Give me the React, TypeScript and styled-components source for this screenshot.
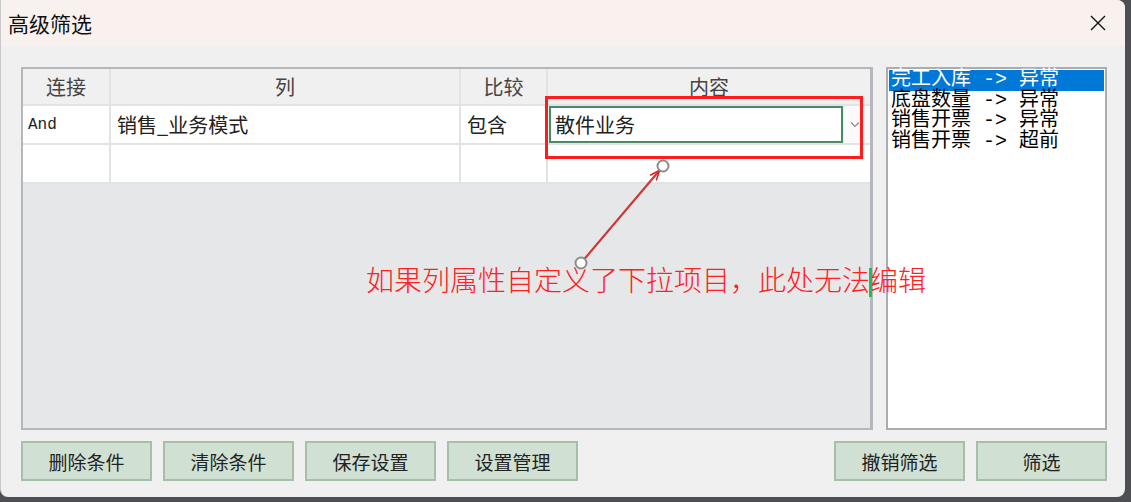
import React from 'react';
import styled, { createGlobalStyle } from 'styled-components';

const GlobalStyle = createGlobalStyle`
    html, body {
        margin: 0;
        padding: 0;
        background: #4d4f52;
    }
    * {
        box-sizing: border-box;
    }
`;

const cjk = `"Noto Sans CJK SC", "Noto Sans", sans-serif`;

const Window = styled.div`
    position: relative;
    width: 1125px;
    height: 497px;
    background: #f0f0f0;
    border-radius: 0 8px 8px 8px;
    border-left: 1px solid #c9c9c9;
    overflow: hidden;
    font-family: ${cjk};
    display: flex;
    flex-direction: column;
`;

const TitleBar = styled.div`
    height: 46px;
    background: #f9f1ee;
    display: flex;
    align-items: center;
    justify-content: space-between;
    padding: 0 19px 0 7px;
    font-size: 21px;
    color: #111;
`;

const Body = styled.div`
    flex: 1;
    padding: 21px 18px 0 20px;
    display: flex;
    flex-direction: column;
    gap: 11px;
`;

const MainRow = styled.div`
    display: flex;
    gap: 13px;
    height: 363px;
`;

const GridPanel = styled.div`
    width: 852px;
    border: 2px solid #b4b7bb;
    border-right-width: 3px;
    background: #e6e7e9;
    display: flex;
    flex-direction: column;
`;

const GridRow = styled.div<{ $header?: boolean }>`
    display: grid;
    grid-template-columns: 88px 350px 87px 322px;
    height: ${p => (p.$header ? 37 : 39)}px;
    background: ${p => (p.$header ? '#f0f0f0' : '#ffffff')};
    border-bottom: 2px solid #e2e3e4;
`;

const Cell = styled.div<{ $header?: boolean; $mono?: boolean }>`
    display: flex;
    align-items: center;
    justify-content: ${p => (p.$header ? 'center' : 'flex-start')};
    padding: 0 ${p => (p.$mono ? 5 : 6)}px;
    border-right: 2px solid #e2e3e4;
    font-size: ${p => (p.$mono ? '16px' : '20px')};
    font-family: ${p => (p.$mono ? `"Liberation Mono", "DejaVu Sans Mono", monospace` : cjk)};
    color: ${p => (p.$header ? '#444' : '#222')};
    &:last-child {
        border-right: none;
    }
`;

const ComboCell = styled.div`
    display: flex;
    align-items: stretch;
    padding: 0 0 0 1px;
`;

const ComboInput = styled.div`
    flex: 1;
    border: 2px solid #4b8b63;
    display: flex;
    align-items: center;
    padding: 0 4px;
    font-size: 20px;
    color: #222;
    background: #fff;
`;

const ComboArrow = styled.div`
    width: 27px;
    display: flex;
    align-items: center;
    justify-content: flex-start;
    padding-left: 6px;
    background: #fafafa;
    border-left: 1px solid #ececec;
`;

const ListPanel = styled.div`
    width: 221px;
    border: 2px solid #a9acb0;
    background: #fff;
    padding: 1px;
    display: flex;
    flex-direction: column;
`;

const ListItem = styled.div<{ $selected?: boolean }>`
    height: 20.5px;
    line-height: 20px;
    padding-left: 2px;
    white-space: pre;
    font-family: "Liberation Mono", ${cjk};
    font-size: 20px;
    color: ${p => (p.$selected ? '#fff' : '#000')};
    background: ${p => (p.$selected ? '#0078d7' : 'transparent')};
`;

const ButtonRow = styled.div`
    display: flex;
    justify-content: space-between;
    width: 1086px;
`;

const ButtonGroup = styled.div`
    display: flex;
    gap: 11px;
`;

const Button = styled.button`
    width: 131px;
    height: 40px;
    background: #d0e0d3;
    border: 2px solid #a5bfaa;
    font-family: ${cjk};
    font-size: 19px;
    color: #222;
    padding: 0;
`;

const Highlight = styled.div`
    position: absolute;
    left: 544px;
    top: 96px;
    width: 318px;
    height: 63px;
    border: 3px solid #ff1c1c;
    pointer-events: none;
`;

const Note = styled.div`
    position: absolute;
    left: 365px;
    top: 264px;
    font-family: "Liberation Serif", ${cjk};
    font-weight: 300;
    font-size: 28px;
    line-height: 36px;
    color: #ff2020;
    white-space: nowrap;
`;

const Caret = styled.div`
    position: absolute;
    left: 868px;
    top: 268px;
    width: 3px;
    height: 29px;
    background: #1fbf56;
`;

const Overlay = styled.svg`
    position: absolute;
    left: -1px;
    top: 0;
    pointer-events: none;
`;

const App = () => {
    const items = [
        '完工入库 -> 异常',
        '底盘数量 -> 异常',
        '销售开票 -> 异常',
        '销售开票 -> 超前',
    ];
    return (
        <>
            <GlobalStyle />
            <Window>
                <TitleBar>
                    <span>高级筛选</span>
                    <svg width="16" height="16" viewBox="0 0 16 16">
                        <path d="M1 1 L15 15 M15 1 L1 15" stroke="#111" strokeWidth="1.4" />
                    </svg>
                </TitleBar>
                <Body>
                    <MainRow>
                        <GridPanel>
                            <GridRow $header>
                                <Cell $header>连接</Cell>
                                <Cell $header>列</Cell>
                                <Cell $header>比较</Cell>
                                <Cell $header>内容</Cell>
                            </GridRow>
                            <GridRow>
                                <Cell $mono>And</Cell>
                                <Cell>销售_业务模式</Cell>
                                <Cell>包含</Cell>
                                <ComboCell>
                                    <ComboInput>散件业务</ComboInput>
                                    <ComboArrow>
                                        <svg width="10" height="7" viewBox="0 0 10 7">
                                            <path d="M1 1.5 L5 5.5 L9 1.5" fill="none" stroke="#8a8a8a" strokeWidth="1.2" />
                                        </svg>
                                    </ComboArrow>
                                </ComboCell>
                            </GridRow>
                            <GridRow>
                                <Cell />
                                <Cell />
                                <Cell />
                                <Cell />
                            </GridRow>
                        </GridPanel>
                        <ListPanel>
                            {items.map((t, i) => (
                                <ListItem key={i} $selected={i === 0}>
                                    {t}
                                </ListItem>
                            ))}
                        </ListPanel>
                    </MainRow>
                    <ButtonRow>
                        <ButtonGroup>
                            <Button>删除条件</Button>
                            <Button>清除条件</Button>
                            <Button>保存设置</Button>
                            <Button>设置管理</Button>
                        </ButtonGroup>
                        <ButtonGroup>
                            <Button>撤销筛选</Button>
                            <Button>筛选</Button>
                        </ButtonGroup>
                    </ButtonRow>
                </Body>
                <Highlight />
                <Note>如果列属性自定义了下拉项目，此处无法编辑</Note>
                <Caret />
                <Overlay width="1125" height="497">
                    <defs>
                        <marker id="ah" markerWidth="10" markerHeight="10" refX="9" refY="5" orient="auto" markerUnits="userSpaceOnUse">
                            <path d="M0 1 L10 5 L0 9" fill="none" stroke="#e02020" strokeWidth="1.5" />
                        </marker>
                    </defs>
                    <line x1="581" y1="263" x2="659" y2="171" stroke="#c83a3a" strokeWidth="2.2" markerEnd="url(#ah)" />
                    <line x1="581" y1="263" x2="659" y2="171" stroke="#ff2a2a" strokeWidth="1" strokeDasharray="3 6" />
                    <circle cx="581" cy="263" r="5.5" fill="#fff" stroke="#8c8c8c" strokeWidth="2" />
                    <circle cx="663" cy="166" r="5.5" fill="#fff" stroke="#8c8c8c" strokeWidth="2" />
                </Overlay>
            </Window>
        </>
    );
};

export default App;
